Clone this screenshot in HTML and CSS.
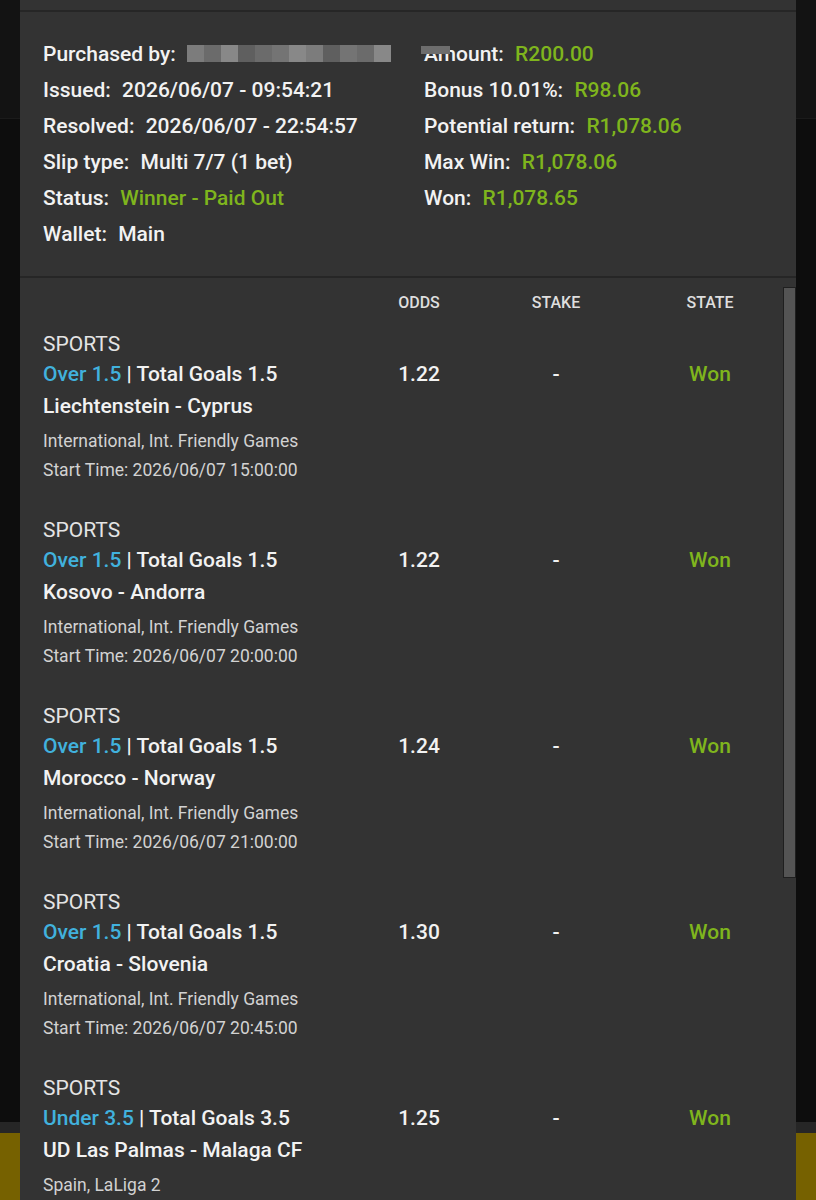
FILE: index.html
```html
<!DOCTYPE html>
<html lang="en">

<head>
    <meta charset="UTF-8">
    <meta name="viewport" content="width=device-width, initial-scale=1.0">
    <link rel="stylesheet" href="styles.css">
    <title>Bet slip</title>
</head>

<body>
    <div class="page">
        <div class="pageTop"></div>
        <div class="pageMiddle"></div>
        <div class="pageEdge"></div>
        <div class="pageFooter"></div>
    </div>

    <div class="slip">
        <div class="slipTop"></div>

        <div class="info">
            <div class="infoCol">
                <div class="infoRow">Purchased by:
                    <span class="blurName">
                        <i class="b1"></i><i class="b2"></i><i class="b3"></i><i class="b4"></i><i class="b2"></i><i class="b5"></i><i class="b3"></i><i class="b1"></i><i class="b4"></i><i class="b5"></i><i class="b2"></i><i class="b3"></i>
                    </span>
                </div>
                <div class="infoRow">Issued: <span class="val">2026/06/07 - 09:54:21</span></div>
                <div class="infoRow">Resolved: <span class="val">2026/06/07 - 22:54:57</span></div>
                <div class="infoRow">Slip type: <span class="val">Multi 7/7 (1 bet)</span></div>
                <div class="infoRow">Status: <span class="val green">Winner - Paid Out</span></div>
                <div class="infoRow">Wallet: <span class="val">Main</span></div>
            </div>
            <div class="infoCol">
                <div class="infoRow amount">Amount: <span class="val green">R200.00</span></div>
                <div class="infoRow">Bonus 10.01%: <span class="val green">R98.06</span></div>
                <div class="infoRow">Potential return: <span class="val green">R1,078.06</span></div>
                <div class="infoRow">Max Win: <span class="val green">R1,078.06</span></div>
                <div class="infoRow">Won: <span class="val green">R1,078.65</span></div>
            </div>
        </div>

        <div class="legs">
            <div class="scrollThumb"></div>

            <div class="legHead">
                <div></div>
                <div>ODDS</div>
                <div>STAKE</div>
                <div>STATE</div>
            </div>

            <div class="leg">
                <div class="legInfo">
                    <div class="legType">SPORTS</div>
                    <div class="legPick"><span class="blue">Over 1.5</span> | Total Goals 1.5</div>
                    <div class="legMatch">Liechtenstein - Cyprus</div>
                    <div class="legMeta">International, Int. Friendly Games</div>
                    <div class="legMeta">Start Time: 2026/06/07 15:00:00</div>
                </div>
                <div class="legCell">1.22</div>
                <div class="legCell">-</div>
                <div class="legCell green">Won</div>
            </div>

            <div class="leg">
                <div class="legInfo">
                    <div class="legType">SPORTS</div>
                    <div class="legPick"><span class="blue">Over 1.5</span> | Total Goals 1.5</div>
                    <div class="legMatch">Kosovo - Andorra</div>
                    <div class="legMeta">International, Int. Friendly Games</div>
                    <div class="legMeta">Start Time: 2026/06/07 20:00:00</div>
                </div>
                <div class="legCell">1.22</div>
                <div class="legCell">-</div>
                <div class="legCell green">Won</div>
            </div>

            <div class="leg">
                <div class="legInfo">
                    <div class="legType">SPORTS</div>
                    <div class="legPick"><span class="blue">Over 1.5</span> | Total Goals 1.5</div>
                    <div class="legMatch">Morocco - Norway</div>
                    <div class="legMeta">International, Int. Friendly Games</div>
                    <div class="legMeta">Start Time: 2026/06/07 21:00:00</div>
                </div>
                <div class="legCell">1.24</div>
                <div class="legCell">-</div>
                <div class="legCell green">Won</div>
            </div>

            <div class="leg">
                <div class="legInfo">
                    <div class="legType">SPORTS</div>
                    <div class="legPick"><span class="blue">Over 1.5</span> | Total Goals 1.5</div>
                    <div class="legMatch">Croatia - Slovenia</div>
                    <div class="legMeta">International, Int. Friendly Games</div>
                    <div class="legMeta">Start Time: 2026/06/07 20:45:00</div>
                </div>
                <div class="legCell">1.30</div>
                <div class="legCell">-</div>
                <div class="legCell green">Won</div>
            </div>

            <div class="leg">
                <div class="legInfo">
                    <div class="legType">SPORTS</div>
                    <div class="legPick"><span class="blue">Under 3.5</span> | Total Goals 3.5</div>
                    <div class="legMatch">UD Las Palmas - Malaga CF</div>
                    <div class="legMeta last">Spain, LaLiga 2</div>
                </div>
                <div class="legCell">1.25</div>
                <div class="legCell">-</div>
                <div class="legCell green">Won</div>
            </div>
        </div>
    </div>
</body>

</html>
```

FILE: styles.css
```css
body {
    margin: 0;
    background-color: #0d0d0d;
    font-family: Roboto, "Liberation Sans", sans-serif;
    color: #f2f2f2;
    overflow: hidden;
}

/* page behind the slip */
.page {
    display: flex;
    flex-direction: column;
    height: 1200px;
}

.pageTop {
    height: 118px;
    background-color: #131313;
    border-bottom: 1px solid #1b1b1b;
}

.pageMiddle {
    flex: 1;
    background-color: #0d0d0d;
}

.pageEdge {
    height: 11px;
    background-color: #262626;
}

.pageFooter {
    height: 67px;
    background-color: #766100;
}

/* slip modal */
.slip {
    position: absolute;
    top: 0;
    left: 20px;
    width: 776px;
    height: 1200px;
    background-color: #333333;
    overflow: hidden;
}

.slipTop {
    height: 10px;
    border-bottom: 2px solid #262626;
}

.info {
    display: grid;
    grid-template-columns: 381px 1fr;
    padding: 24px 0 24px 23px;
    border-bottom: 2px solid #262626;
    font-size: 21px;
    font-weight: 500;
}

.infoRow {
    line-height: 36px;
    white-space: nowrap;
}

.val {
    margin-left: 6px;
}

.green {
    color: #7fb51d;
}

.blue {
    color: #41b1dd;
}

.blurName {
    display: inline-flex;
    vertical-align: middle;
    margin-left: 6px;
    height: 17px;
    position: relative;
    top: -2px;
}

.blurName i {
    display: block;
    width: 17px;
    height: 17px;
}

.b1 { background-color: #7c7c7c; }
.b2 { background-color: #6b6b6b; }
.b3 { background-color: #888888; }
.b4 { background-color: #5f5f5f; }
.b5 { background-color: #747474; }

.amount {
    position: relative;
}

.amount::before {
    content: "";
    position: absolute;
    left: -3px;
    top: 10px;
    width: 29px;
    height: 8px;
    background-color: #6d6d6d;
}

/* legs table */
.legs {
    position: relative;
    padding: 15px 0 0 23px;
}

.scrollThumb {
    position: absolute;
    top: 9px;
    right: 0;
    width: 11px;
    height: 589px;
    background-color: #545454;
    border: 1px solid #1f1f1f;
}

.legHead,
.leg {
    display: grid;
    grid-template-columns: 338px 76px 198px 110px;
}

.legHead {
    font-size: 16px;
    font-weight: 500;
    line-height: 20px;
    color: #dedede;
    text-align: center;
    margin-bottom: 16px;
}

.leg {
    padding-bottom: 30px;
}

.legType {
    font-size: 21px;
    line-height: 30px;
    color: #e4e4e4;
}

.legPick {
    font-size: 21px;
    line-height: 30px;
    font-weight: 500;
}

.legMatch {
    font-size: 21px;
    line-height: 34px;
    font-weight: 500;
}

.legMeta {
    font-size: 17.5px;
    line-height: 29px;
    color: #d2d2d2;
}

.legMatch + .legMeta {
    margin-top: 4px;
}

.legMeta.last {
    line-height: 28px;
}

.legCell {
    padding-top: 30px;
    font-size: 21px;
    line-height: 30px;
    font-weight: 500;
    text-align: center;
}
```
